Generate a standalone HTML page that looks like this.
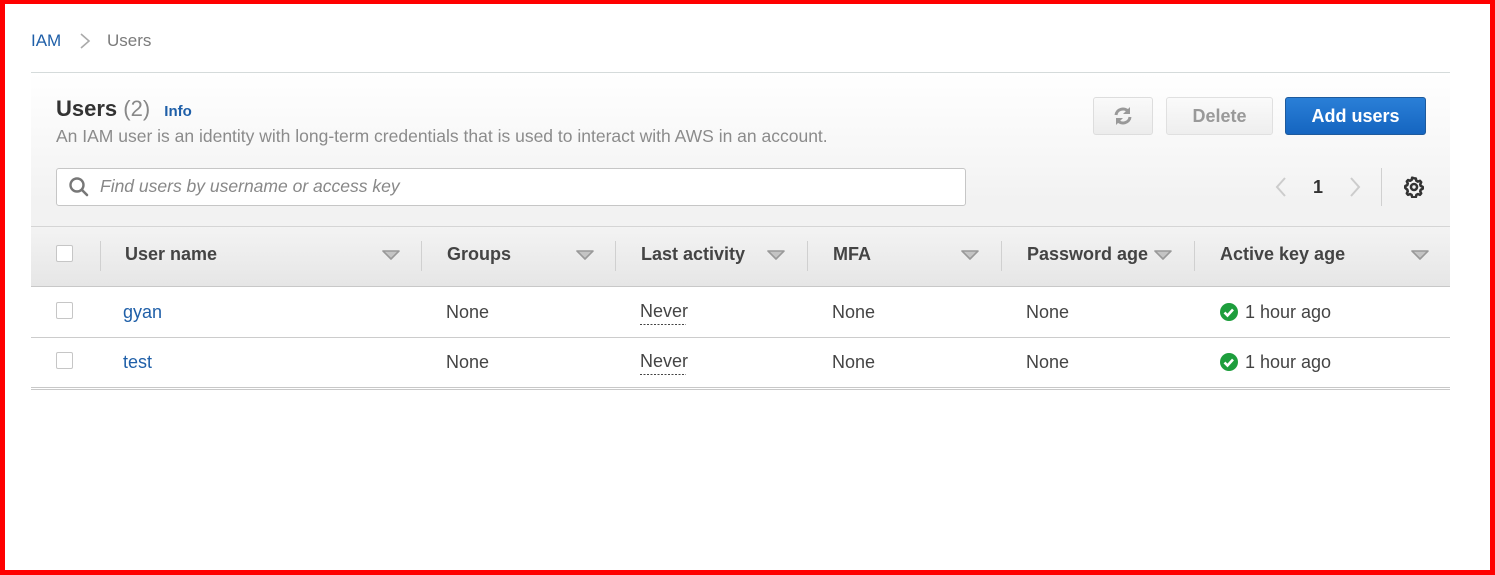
<!DOCTYPE html>
<html><head><meta charset="utf-8">
<style>
*{box-sizing:border-box;margin:0;padding:0}
body{width:1495px;height:575px;overflow:hidden;background:#fff;font-family:"Liberation Sans",Arial,sans-serif;position:relative}
.frame{position:absolute;left:0;top:0;width:1495px;height:575px;border-left:5px solid #f00;border-top:4px solid #f00;border-right:5px solid #f00;border-bottom:5px solid #f00;z-index:10;pointer-events:none}
.a{position:absolute}
.crumb{left:31px;top:31px;font-size:17px;color:#1f5fa8}
.panel{left:31px;top:72px;width:1419px;height:215px;border-top:1px solid #d5dbdb;background:linear-gradient(#fff,#f2f2f2 60%,#f2f2f2)}
.th{left:31px;top:226px;width:1419px;height:61px;background:linear-gradient(#f3f3f3,#e6e6e6);border-top:1px solid #d5d5d5;border-bottom:1px solid #c8c8c8}
.hd{font-size:18px;font-weight:bold;color:#444;top:244px}
.sep{width:1px;height:30px;background:#d0d0d0;top:241px}
.cb{width:17px;height:17px;border:1px solid #c6c6c6;background:#fff;border-radius:2px}
.cell{font-size:18px;color:#444}
.btn{height:38px;border-radius:3px;font-size:18px;font-weight:bold;text-align:center;line-height:36px}
</style></head><body>
<div class="frame"></div>
<div class="a crumb">IAM</div>
<svg class="a" style="left:78px;top:32px" width="14" height="18" viewBox="0 0 14 18"><path d="M3 2l8 7-8 7" fill="none" stroke="#aaa" stroke-width="1.6"/></svg>
<div class="a crumb" style="left:107px;color:#7b7b7b">Users</div>
<div class="a panel"></div>
<div class="a" style="left:56px;top:96px;font-size:22px;font-weight:bold;color:#333">Users <span style="font-weight:normal;color:#888">(2)</span> <span style="font-size:15px;color:#1f5fa8;margin-left:8px">Info</span></div>
<div class="a" style="left:56px;top:126px;font-size:17.5px;color:#8b8b8b">An IAM user is an identity with long-term credentials that is used to interact with AWS in an account.</div>
<div class="a" style="left:56px;top:168px;width:910px;height:38px;border:1px solid #c6c6c6;border-radius:3px;background:#fff"></div>
<svg class="a" style="left:68px;top:176px" width="22" height="22" viewBox="0 0 22 22"><circle cx="9" cy="9" r="6.5" fill="none" stroke="#777" stroke-width="2.4"/><path d="M14 14l5 5" stroke="#777" stroke-width="2.6" stroke-linecap="round"/></svg>
<div class="a" style="left:100px;top:176px;font-size:17.5px;font-style:italic;color:#888">Find users by username or access key</div>
<div class="a btn" style="left:1093px;top:97px;width:60px;border:1px solid #ddd;background:linear-gradient(#fafafa,#ececec)"></div>
<svg class="a" style="left:1112px;top:106px" width="22" height="20" viewBox="0 0 22 20"><path d="M4 9a7 6.5 0 0 1 12.5-3.5" fill="none" stroke="#999" stroke-width="3"/><path d="M18 1v7h-7z" fill="#999"/><path d="M18 11a7 6.5 0 0 1-12.5 3.5" fill="none" stroke="#999" stroke-width="3"/><path d="M4 19v-7h7z" fill="#999"/></svg>
<div class="a btn" style="left:1166px;top:97px;width:107px;border:1px solid #e0e0e0;background:linear-gradient(#fafafa,#eee);color:#999">Delete</div>
<div class="a btn" style="left:1285px;top:97px;width:141px;border:1px solid #1e5a9c;background:linear-gradient(#2a7fd7,#1565c0);color:#fff">Add users</div>
<svg class="a" style="left:1273px;top:176px" width="16" height="22" viewBox="0 0 16 22"><path d="M12 2l-8 9 8 9" fill="none" stroke="#ccc" stroke-width="2"/></svg>
<div class="a" style="left:1313px;top:177px;font-size:18px;font-weight:bold;color:#333">1</div>
<svg class="a" style="left:1347px;top:176px" width="16" height="22" viewBox="0 0 16 22"><path d="M4 2l8 9-8 9" fill="none" stroke="#ccc" stroke-width="2"/></svg>
<div class="a" style="left:1381px;top:168px;width:1px;height:38px;background:#d0d0d0"></div>
<svg class="a" style="left:1403px;top:176px" width="22" height="22" viewBox="0 0 24 24"><path d="M12 2.5l2 .3.6 2.4 1.6.9 2.3-.8 1.3 1.5-1 2.3.5 1.7 2.2 1.1v2l-2.2 1.1-.5 1.7 1 2.3-1.3 1.5-2.3-.8-1.6.9-.6 2.4-2 .3-2-.3-.6-2.4-1.6-.9-2.3.8-1.3-1.5 1-2.3-.5-1.7L2.5 13v-2l2.2-1.1.5-1.7-1-2.3 1.3-1.5 2.3.8 1.6-.9.6-2.4z" fill="none" stroke="#333" stroke-width="2.8" stroke-linejoin="round"/><circle cx="12" cy="12" r="3.3" fill="none" stroke="#333" stroke-width="2.8"/></svg>
<div class="a th"></div>
<div class="a cb" style="left:56px;top:245px"></div>
<div class="a sep" style="left:100px"></div>
<div class="a sep" style="left:421px"></div>
<div class="a sep" style="left:615px"></div>
<div class="a sep" style="left:807px"></div>
<div class="a sep" style="left:1001px"></div>
<div class="a sep" style="left:1194px"></div>
<div class="a hd" style="left:125px">User name</div>
<div class="a hd" style="left:447px">Groups</div>
<div class="a hd" style="left:641px">Last activity</div>
<div class="a hd" style="left:833px">MFA</div>
<div class="a hd" style="left:1027px">Password age</div>
<div class="a hd" style="left:1220px">Active key age</div>
<svg class="a" style="left:0;top:0" width="1495" height="575">
<g fill="#c4c4c4" stroke="#999" stroke-width="1.6" stroke-linejoin="round">
<path d="M383 251h16l-8 8z"/><path d="M577 251h16l-8 8z"/><path d="M768 251h16l-8 8z"/><path d="M962 251h16l-8 8z"/><path d="M1155 251h16l-8 8z"/><path d="M1412 251h16l-8 8z"/>
</g>
<line x1="31" y1="337.5" x2="1450" y2="337.5" stroke="#ccc"/>
<line x1="31" y1="387.5" x2="1450" y2="387.5" stroke="#c8c8c8"/>
<line x1="31" y1="389.5" x2="1450" y2="389.5" stroke="#c8c8c8"/>
<line x1="640" y1="324.5" x2="686" y2="324.5" stroke="#444" stroke-dasharray="2 1.5"/>
<line x1="640" y1="374.5" x2="686" y2="374.5" stroke="#444" stroke-dasharray="2 1.5"/>
<g><circle cx="1229" cy="312" r="9" fill="#1d9e3c"/><path d="M1224.5 312.5l3 3 5.5-6" fill="none" stroke="#fff" stroke-width="2.6"/></g>
<g><circle cx="1229" cy="362" r="9" fill="#1d9e3c"/><path d="M1224.5 362.5l3 3 5.5-6" fill="none" stroke="#fff" stroke-width="2.6"/></g>
</svg>
<div class="a cb" style="left:56px;top:302px"></div>
<div class="a cell" style="left:123px;top:302px;color:#1f5fa8">gyan</div>
<div class="a cell" style="left:446px;top:302px">None</div>
<div class="a cell" style="left:640px;top:301px">Never</div>
<div class="a cell" style="left:832px;top:302px">None</div>
<div class="a cell" style="left:1026px;top:302px">None</div>
<div class="a cell" style="left:1245px;top:302px">1 hour ago</div>
<div class="a cb" style="left:56px;top:352px"></div>
<div class="a cell" style="left:123px;top:352px;color:#1f5fa8">test</div>
<div class="a cell" style="left:446px;top:352px">None</div>
<div class="a cell" style="left:640px;top:351px">Never</div>
<div class="a cell" style="left:832px;top:352px">None</div>
<div class="a cell" style="left:1026px;top:352px">None</div>
<div class="a cell" style="left:1245px;top:352px">1 hour ago</div>
</body></html>
